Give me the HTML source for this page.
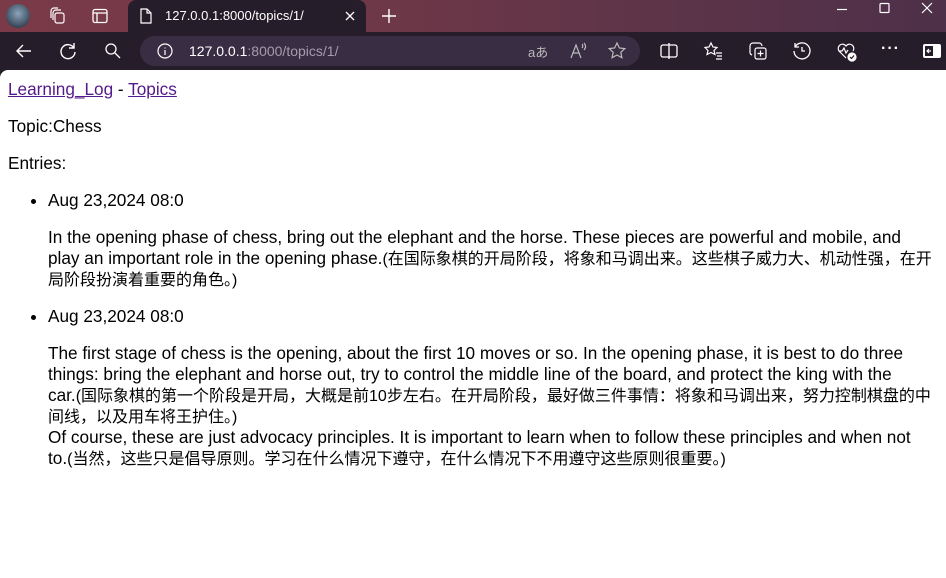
<!DOCTYPE html>
<html><head><meta charset="utf-8"><style>
*{box-sizing:border-box}
html,body{margin:0;padding:0;width:946px;height:578px;overflow:hidden;background:#261d2b}
.tabbar{position:absolute;left:0;top:0;width:946px;height:32px;background:linear-gradient(90deg,#7b3a48 0%,#6e3848 40%,#4d3049 100%)}
.tab{position:absolute;left:128px;top:0;width:238px;height:32px;background:#261d2b;border-radius:8px 8px 0 0;color:#fff;font:13px "Liberation Sans",sans-serif}
.tab span{position:absolute;left:37px;top:8px}
.toolbar{position:absolute;left:0;top:32px;width:946px;height:38px;background:#261d2b}
.addr{position:absolute;left:140px;top:4px;width:500px;height:30px;border-radius:15px;background:#392d43;font:14px "Liberation Sans",sans-serif;color:#a79cae}
.addr b{font-weight:normal;color:#fff}
.content{position:absolute;left:0;top:70px;width:946px;height:508px;background:#fff;border-top-left-radius:8px;padding:9px 8px 8px;font-family:"Liberation Sans","Noto Sans CJK SC",sans-serif;font-size:17.2px;line-height:21px;color:#000}
.c{font-size:16px;line-height:1}
p{margin:16px 0}
.content>p:first-child{margin-top:0}
a{color:#551a8b}
ul{margin:16px 0;padding-left:40px}
li p{white-space:nowrap}
svg{position:absolute}
</style></head><body>
<div class="tabbar">
<div style="position:absolute;left:6px;top:4px;width:24px;height:24px;border-radius:50%;background:radial-gradient(circle at 50% 40%,#8aa4bd,#3c4a5a 70%,#222)"></div>
<svg style="left:48px;top:6px" width="20" height="20" viewBox="0 0 20 20" fill="none" stroke="#fff" stroke-width="1.2"><rect x="7" y="7" width="9" height="10" rx="2"/><path d="M5 14V7a3 3 0 0 1 3-3h5M3 12V5a3 3 0 0 1 3-3h4"/></svg>
<svg style="left:91px;top:7px" width="18" height="18" viewBox="0 0 18 18" fill="none" stroke="#fff" stroke-width="1.3"><rect x="2" y="2.5" width="14" height="13" rx="2"/><path d="M2 6h14M6 6v9.5"/></svg>
<div class="tab"><svg style="left:11px;top:8px" width="14" height="16" viewBox="0 0 14 16" fill="none" stroke="#fff" stroke-width="1.2"><path d="M2 1h6l4 4v10H2z M8 1v4h4"/></svg><span>127.0.0.1:8000/topics/1/</span><svg style="left:216px;top:10px" width="12" height="12" viewBox="0 0 12 12" stroke="#fff" stroke-width="1.3"><path d="M2 2l8 8M10 2l-8 8"/></svg></div>
<svg style="left:380px;top:7px" width="18" height="18" viewBox="0 0 18 18" stroke="#fff" stroke-width="1.4"><path d="M9 2v14M2 9h14"/></svg>
<svg style="left:834px;top:2px" width="100" height="14" viewBox="0 0 100 14" fill="none" stroke="#fff" stroke-width="1.2"><path d="M3 7.5h10"/><rect x="46" y="1.5" width="9" height="9" rx="1"/><path d="M88 1l10 10M98 1l-10 10"/></svg>
</div>
<div class="toolbar">
<svg style="left:14px;top:9px" width="20" height="20" viewBox="0 0 20 20" fill="none" stroke="#fff" stroke-width="1.4"><path d="M17 10H3M9 4l-6 6 6 6"/></svg>
<svg style="left:58px;top:9px" width="20" height="20" viewBox="0 0 20 20" fill="none" stroke="#fff" stroke-width="1.4"><path d="M16 7a7 7 0 1 0 1 4M16 2v5h-5"/></svg>
<svg style="left:104px;top:10px" width="18" height="18" viewBox="0 0 18 18" fill="none" stroke="#fff" stroke-width="1.3"><circle cx="7" cy="7" r="5"/><path d="M11 11l5 5"/></svg>
<div class="addr"><svg style="left:17px;top:7px" width="16" height="16" viewBox="0 0 16 16" fill="none" stroke="#fff" stroke-width="1.2"><circle cx="8" cy="8" r="7"/><path d="M8 7v5M8 4.5v1"/></svg><span style="position:absolute;left:49px;top:7px"><b>127.0.0.1</b>:8000/topics/1/</span>
<span style="position:absolute;left:388px;top:6px;color:#bbb;font-size:13px">aあ</span>
<svg style="left:428px;top:5px" width="20" height="20" viewBox="0 0 20 20" fill="none" stroke="#bbb" stroke-width="1.2"><path d="M3 17L8 4l5 13M5 12h6M14 3c1 1 1 3 0 4M16 2c2 2 2 5 0 7"/></svg>
<svg style="left:467px;top:5px" width="20" height="20" viewBox="0 0 20 20" fill="none" stroke="#bbb" stroke-width="1.2"><path d="M10 2l2.4 5 5.4.6-4 3.7 1.1 5.4L10 14l-4.9 2.7 1.1-5.4-4-3.7 5.4-.6z"/></svg></div>
<svg style="left:659px;top:9px" width="20" height="20" viewBox="0 0 20 20" fill="none" stroke="#fff" stroke-width="1.3"><rect x="2" y="4" width="16" height="12" rx="2"/><path d="M10 2v16"/></svg>
<svg style="left:703px;top:9px" width="20" height="20" viewBox="0 0 20 20" fill="none" stroke="#fff" stroke-width="1.2"><path d="M8 2l2 4 4 .5-3 3 1 4-4-2-4 2 1-4-3-3 4-.5zM13 12h6M14 15h5M13 18h6"/></svg>
<svg style="left:748px;top:9px" width="20" height="20" viewBox="0 0 20 20" fill="none" stroke="#fff" stroke-width="1.2"><path d="M4 14a3 3 0 0 1-2-3V5a3 3 0 0 1 3-3h6a3 3 0 0 1 3 3"/><rect x="7" y="7" width="11" height="11" rx="2"/><path d="M12.5 9.5v6M9.5 12.5h6"/></svg>
<svg style="left:792px;top:9px" width="20" height="20" viewBox="0 0 20 20" fill="none" stroke="#fff" stroke-width="1.3"><path d="M3 6a8 8 0 1 1-1 4M3 2v4h4M10 6v4h3"/></svg>
<svg style="left:836px;top:9px" width="22" height="22" viewBox="0 0 22 22" fill="none" stroke="#fff" stroke-width="1.2"><path d="M10 17L3 10a4 4 0 0 1 7-5 4 4 0 0 1 7 5M3 10h3l2-3 2 5 2-3"/><circle cx="16" cy="16" r="4" fill="#fff"/><path d="M14 16l1.5 1.5 2.5-3" stroke="#261d2b"/></svg>
<span style="position:absolute;left:881px;top:8px;color:#fff;font:bold 16px 'Liberation Sans',sans-serif;letter-spacing:1px">···</span>
<svg style="left:922px;top:10px" width="20" height="18" viewBox="0 0 20 18"><rect x="1" y="2" width="18" height="14" rx="2" fill="#fff"/><rect x="3" y="4" width="8" height="10" fill="#261d2b"/><path d="M9 9H5M7 7L5 9l2 2" stroke="#fff" stroke-width="1.2" fill="none"/></svg>
</div>
<div class="content">
<p><a href="#">Learning_Log</a> - <a href="#">Topics</a></p>
<p>Topic:Chess</p>
<p>Entries:</p>
<ul>
<li><p>Aug 23,2024 08:0</p>
<p>In the opening phase of chess, bring out the elephant and the horse. These pieces are powerful and mobile, and<br>play an important role in the opening phase.<span class="c">(在国际象棋的开局阶段，将象和马调出来。这些棋子威力大、机动性强，在开<br>局阶段扮演着重要的角色。)</span></p></li>
<li><p>Aug 23,2024 08:0</p>
<p>The first stage of chess is the opening, about the first 10 moves or so. In the opening phase, it is best to do three<br>things: bring the elephant and horse out, try to control the middle line of the board, and protect the king with the<br>car.<span class="c">(国际象棋的第一个阶段是开局，大概是前10步左右。在开局阶段，最好做三件事情：将象和马调出来，努力控制棋盘的中<br>间线，以及用车将王护住。)</span><br>Of course, these are just advocacy principles. It is important to learn when to follow these principles and when not<br>to.<span class="c">(当然，这些只是倡导原则。学习在什么情况下遵守，在什么情况下不用遵守这些原则很重要。)</span></p></li>
</ul>
</div>
</body></html>
